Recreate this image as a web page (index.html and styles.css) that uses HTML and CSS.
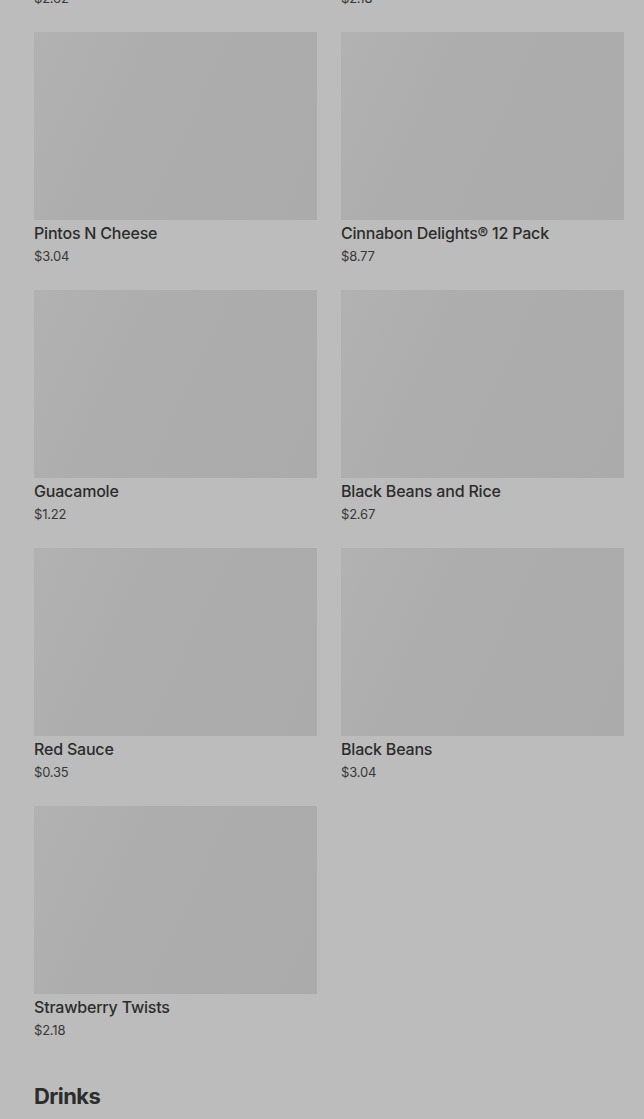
FILE: index.html
```html
<!DOCTYPE html>
<html lang="en">
<head>
    <meta charset="UTF-8">
    <meta name="viewport" content="width=device-width, initial-scale=1.0">
    <title>Menu</title>
    <link rel="stylesheet" href="styles.css">
</head>
<body>
    <div class="menu">
        <div class="productos">
            <div class="producto">
                <div class="foto"></div>
                <div class="nombre">Cheesy Fiesta Potatoes</div>
                <div class="precio">$2.62</div>
            </div>
            <div class="producto">
                <div class="foto"></div>
                <div class="nombre">Chips and Nacho Cheese Sauce</div>
                <div class="precio">$2.18</div>
            </div>
            <div class="producto">
                <div class="foto"></div>
                <div class="nombre">Pintos N Cheese</div>
                <div class="precio">$3.04</div>
            </div>
            <div class="producto">
                <div class="foto"></div>
                <div class="nombre">Cinnabon Delights® 12 Pack</div>
                <div class="precio">$8.77</div>
            </div>
            <div class="producto">
                <div class="foto"></div>
                <div class="nombre">Guacamole</div>
                <div class="precio">$1.22</div>
            </div>
            <div class="producto">
                <div class="foto"></div>
                <div class="nombre">Black Beans and Rice</div>
                <div class="precio">$2.67</div>
            </div>
            <div class="producto">
                <div class="foto"></div>
                <div class="nombre">Red Sauce</div>
                <div class="precio">$0.35</div>
            </div>
            <div class="producto">
                <div class="foto"></div>
                <div class="nombre">Black Beans</div>
                <div class="precio">$3.04</div>
            </div>
            <div class="producto">
                <div class="foto"></div>
                <div class="nombre">Strawberry Twists</div>
                <div class="precio">$2.18</div>
            </div>
        </div>

        <h2 class="seccion">Drinks</h2>
    </div>
</body>
</html>
```

FILE: styles.css
```css
body{
    margin: 0;
    background-color: #bcbcbc;
    font-family: Inter, "Liberation Sans", sans-serif;
    color: #2c2c2c;
    overflow: hidden;
}
.menu{
    padding: 0 20px 0 34px;
    margin-top: -226px;
}
.productos{
    display: grid;
    grid-template-columns: 283px 283px;
    column-gap: 24px;
    row-gap: 24px;
}
.foto{
    height: 188px;
    background: linear-gradient(115deg, #b2b2b2 0%, #adadad 35%, #ababab 100%);
}
.nombre{
    margin-top: 3px;
    font-size: 16px;
    line-height: 20px;
    font-weight: 500;
    letter-spacing: -0.2px;
}
.precio{
    margin-top: 3px;
    font-size: 13px;
    line-height: 20px;
    letter-spacing: -0.2px;
    color: #383838;
}
.seccion{
    margin: 42px 0 0;
    font-size: 22px;
    line-height: 28px;
    font-weight: 700;
    letter-spacing: -0.6px;
}
```
